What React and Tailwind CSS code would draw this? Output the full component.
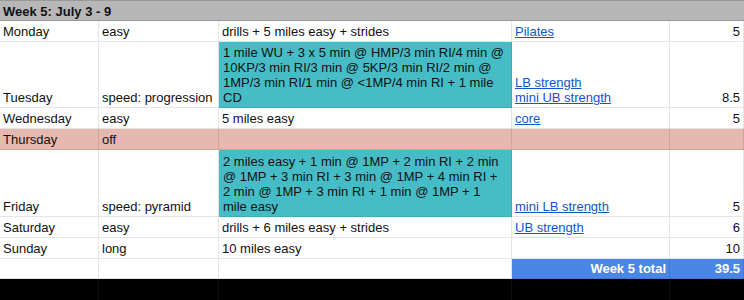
const cols = 'grid grid-cols-[99px_120px_293px_158px_74px]';
const cell = 'border-r border-b border-black/10 flex items-end px-[3px] pb-[2px] leading-[15px] overflow-hidden';

function Link({ children }) {
  return <span className="text-[#1155cc] underline underline-offset-[1px]">{children}</span>;
}

const rows = [
  { day: 'Monday', type: 'easy', workout: 'drills + 5 miles easy + strides', extra: [<Link key="a">Pilates</Link>], miles: '5' },
  {
    day: 'Tuesday',
    type: 'speed: progression',
    workout: [
      '1 mile WU + 3 x 5 min @ HMP/3 min RI/4 min @',
      '10KP/3 min RI/3 min @ 5KP/3 min RI/2 min @',
      '1MP/3 min RI/1 min @ <1MP/4 min RI + 1 mile',
      'CD',
    ],
    teal: true,
    h: 'h-[66px]',
    extra: [<Link key="a">LB strength</Link>, <Link key="b">mini UB strength</Link>],
    miles: '8.5',
  },
  { day: 'Wednesday', type: 'easy', workout: '5 miles easy', extra: [<Link key="a">core</Link>], miles: '5' },
  { day: 'Thursday', type: 'off', workout: '', extra: [], miles: '', pink: true },
  {
    day: 'Friday',
    type: 'speed: pyramid',
    workout: [
      '2 miles easy + 1 min @ 1MP + 2 min RI + 2 min',
      '@ 1MP + 3 min RI + 3 min @ 1MP + 4 min RI +',
      '2 min @ 1MP + 3 min RI + 1 min @ 1MP + 1',
      'mile easy',
    ],
    teal: true,
    h: 'h-[67px]',
    extra: [<Link key="a">mini LB strength</Link>],
    miles: '5',
  },
  { day: 'Saturday', type: 'easy', workout: 'drills + 6 miles easy + strides', extra: [<Link key="a">UB strength</Link>], miles: '6' },
  { day: 'Sunday', type: 'long', workout: '10 miles easy', extra: [], miles: '10' },
];

export default function App() {
  return (
    <div className="w-[744px] h-[300px] bg-black text-[13px] text-[#111] font-['Liberation_Sans',Arial,sans-serif] overflow-hidden">
      <div className="h-[21px] bg-[#b7b7b7] border-t border-b border-[#9a9a9a] flex items-end px-[3px] pb-[1px] leading-[15px] font-bold">
        Week 5: July 3 - 9
      </div>
      {rows.map((r) => (
        <div key={r.day} className={`${cols} ${r.h || 'h-[21px]'} ${r.pink ? 'bg-[#e6b8af]' : 'bg-white'}`}>
          <div className={cell}>{r.day}</div>
          <div className={`${cell} whitespace-nowrap`}>{r.type}</div>
          <div className={`${cell} ${r.teal ? 'bg-[#46bdc6] pl-[4px]' : ''}`}>
            {Array.isArray(r.workout) ? (
              <div className="flex flex-col whitespace-nowrap">
                {r.workout.map((l) => (
                  <span key={l}>{l}</span>
                ))}
              </div>
            ) : (
              <span className="whitespace-nowrap">{r.workout}</span>
            )}
          </div>
          <div className={cell}>
            <div className="flex flex-col">{r.extra}</div>
          </div>
          <div className={`${cell} justify-end`}>{r.miles}</div>
        </div>
      ))}
      <div className={`${cols} h-[20px] bg-white`}>
        <div className={cell}></div>
        <div className={cell}></div>
        <div className={cell}></div>
        <div className={`${cell} justify-end bg-[#4a86e8] text-white font-bold`}>Week 5 total</div>
        <div className={`${cell} justify-end bg-[#4a86e8] text-white font-bold`}>39.5</div>
      </div>
      <div className={`${cols} h-[21px]`}>
        <div className="border-r border-white/5"></div>
        <div className="border-r border-white/5"></div>
        <div className="border-r border-white/5"></div>
        <div className="border-r border-white/5"></div>
        <div></div>
      </div>
    </div>
  );
}
